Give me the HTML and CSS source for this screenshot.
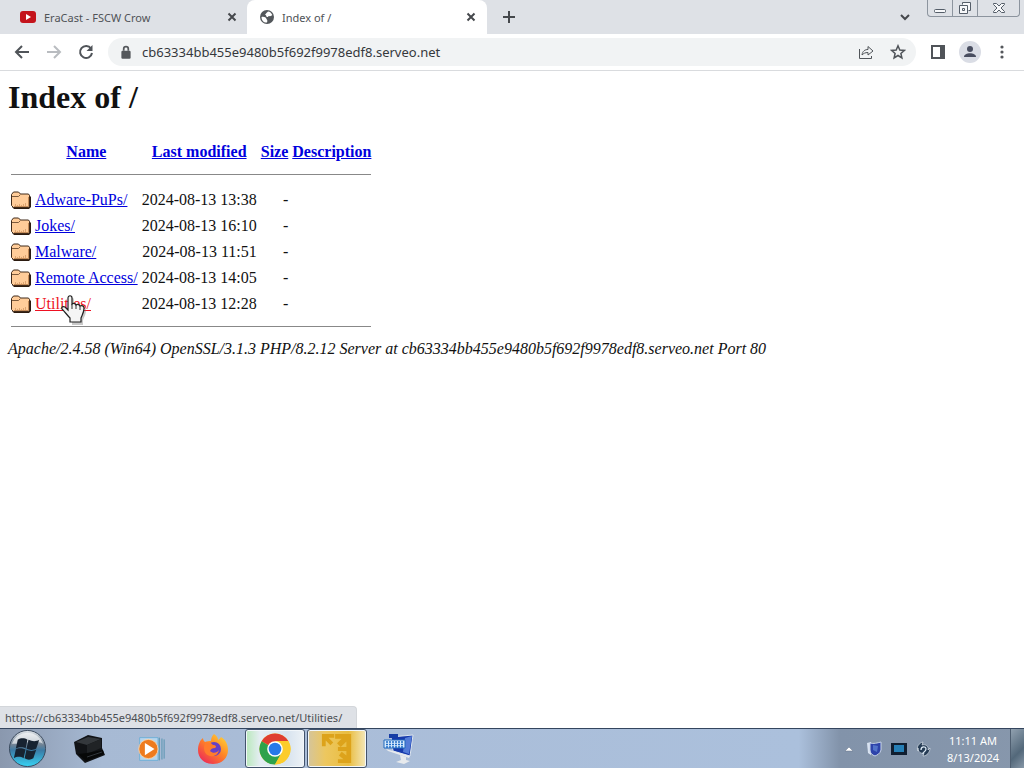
FILE: index.html
```html
<!DOCTYPE html>
<html lang="en">
<head>
<meta charset="utf-8">
<title>Index of /</title>
<link rel="stylesheet" href="styles.css">
</head>
<body>
<header class="browser">
  <div class="tabstrip">
    <div class="tab">
      <svg class="favicon" viewBox="0 0 16 16"><rect y="2" width="16" height="12" rx="3" fill="#c4141c"/><path d="M6 5l5 3-5 3z" fill="#fff"/></svg>
      <span class="tab-title">EraCast - FSCW Crow</span>
      <button class="tab-close" aria-label="Close tab"><svg viewBox="0 0 10 10"><path d="M1.500 1.500l7 7M8.500 1.500l-7 7"/></svg></button>
    </div>
    <div class="tab active">
      <svg class="favicon" viewBox="0 0 16 16"><circle cx="8" cy="8" r="7" fill="#53575b"/><path d="M2.500 8c2-.5 4.500 0 5 2 .3 1 1.500 1 .5 3.500C5 14 2.500 11.500 2.500 8zM9 2.600c2 .2 3.500 1.600 4.300 3.400-1 .8-1.800 1.500-3 1-1.300-.5-.8 1.500-2.300 1-1.200-.4-.5-2-1.500-2C5.500 6 7 4.500 9 2.600z" fill="#fff"/></svg>
      <span class="tab-title">Index of /</span>
      <button class="tab-close" aria-label="Close tab"><svg viewBox="0 0 10 10"><path d="M1.500 1.500l7 7M8.500 1.500l-7 7"/></svg></button>
    </div>
    <button class="new-tab" aria-label="New tab"><svg viewBox="0 0 14 14"><path d="M7 1v12M1 7h12"/></svg></button>
    <button class="tab-search" aria-label="Search tabs"><svg viewBox="0 0 12 12"><path d="M2 4l4 4 4-4"/></svg></button>
    <div class="window-controls">
      <button aria-label="Minimize"><svg viewBox="0 0 16 16"><rect x="2.500" y="9.500" width="11" height="3" rx="1"/></svg></button>
      <button aria-label="Restore"><svg viewBox="0 0 16 16"><path d="M5.500 4.500v-2h8v8h-2M2.500 5.500h8v8h-8zM5.500 8.500h2v2h-2z"/></svg></button>
      <button class="close" aria-label="Close"><svg viewBox="0 0 16 16"><path d="M2.500 3.500h3L8 6l2.500-2.500h3v1L10 8l3.500 3.500v1h-3L8 10l-2.500 2.500h-3v-1L6 8 2.500 4.500z"/></svg></button>
    </div>
  </div>
  <div class="toolbar">
    <button class="tool" aria-label="Back"><svg viewBox="0 0 16 16"><path d="M15 8H2M8 2L2 8l6 6"/></svg></button>
    <button class="tool faded" aria-label="Forward"><svg viewBox="0 0 16 16"><path d="M1 8h13M8 2l6 6-6 6"/></svg></button>
    <button class="tool" aria-label="Reload"><svg viewBox="0 0 16 16"><path d="M13 4.500A6 6 0 1 0 14 9"/><path d="M14.500 1v6h-6z" class="solid"/></svg></button>
    <div class="omnibox">
      <svg class="lock" viewBox="0 0 10 13"><rect x="1" y="5" width="8" height="7" rx="1" fill="#54575b"/><path d="M3 5V3.500a2 2 0 0 1 4 0V5" fill="none" stroke="#54575b" stroke-width="1.500"/></svg>
      <input class="address" type="text" aria-label="Address" value="cb63334bb455e9480b5f692f9978edf8.serveo.net">
      <button class="tool thin" aria-label="Share"><svg viewBox="0 0 16 16"><path d="M1.500 5v9.500h12V12M4 11c.5-4 3-5.500 6-5.500V2.500L15 7l-5 4V8.500C7 8.500 5.500 9.500 4 11z"/></svg></button>
      <button class="tool thin" aria-label="Bookmark this tab"><svg viewBox="0 0 16 16"><path d="M8 1.800l1.800 4.200 4.500.4-3.400 3 1 4.500L8 11.500l-3.900 2.400 1-4.500-3.400-3 4.500-.4z"/></svg></button>
    </div>
    <button class="tool panel" aria-label="Side panel"><svg viewBox="0 0 16 16"><path d="M2 2h12v12H2z"/><path d="M10 2h4v12h-4z" class="solid"/></svg></button>
    <button class="tool avatar" aria-label="Profile"><svg viewBox="0 0 22 22"><circle cx="11" cy="11" r="11" fill="#dadde5" stroke="none"/><circle cx="11" cy="8" r="3" fill="#494e60" stroke="none"/><path d="M5 16c0-5 12-5 12 0z" fill="#494e60" stroke="none"/></svg></button>
    <button class="tool" aria-label="Menu"><svg viewBox="0 0 16 16"><g fill="#54575b" stroke="none"><circle cx="8" cy="3" r="1.600"/><circle cx="8" cy="8" r="1.600"/><circle cx="8" cy="13" r="1.600"/></g></svg></button>
  </div>
</header>

<main class="page">
  <svg class="symbols" aria-hidden="true">
    <defs>
      <symbol id="folder" viewBox="0 0 20 22">
        <path d="M1 7l2-2h5l2 2h8l2 2v10l-2 2H3l-2-2z" fill="#2b1b10"/>
        <path d="M.5 6.500L2.500 4h5l2 2h8l1 1.500V18l-1 1.500h-15l-2-2z" fill="#ffcc99" stroke="#402a1a"/>
        <path d="M1 8.500h6.500L9.500 6.500" fill="none" stroke="#7c5a3c"/>
        <path d="M3 18.500h14M17.500 9v9" fill="none" stroke="#c58c59"/>
        <path d="M4.500 16v2M6.500 17v1M8.500 16v2M10.500 17v1M12.500 16v2M14.500 15v3" fill="none" stroke="#dda470"/>
      </symbol>
    </defs>
  </svg>
  <h1>Index of /</h1>
  <table class="listing">
    <thead>
      <tr><th class="icon"></th><th><a href="#name">Name</a></th><th><a href="#modified">Last modified</a></th><th><a href="#size">Size</a></th><th><a href="#description">Description</a></th></tr>
      <tr class="rule"><th colspan="5"><hr></th></tr>
    </thead>
    <tbody>
      <tr><td class="icon"><svg class="folder"><use href="#folder"/></svg></td><td><a href="#adware">Adware-PuPs/</a></td><td class="num">2024-08-13 13:38</td><td class="num">-</td><td></td></tr>
      <tr><td class="icon"><svg class="folder"><use href="#folder"/></svg></td><td><a href="#jokes">Jokes/</a></td><td class="num">2024-08-13 16:10</td><td class="num">-</td><td></td></tr>
      <tr><td class="icon"><svg class="folder"><use href="#folder"/></svg></td><td><a href="#malware">Malware/</a></td><td class="num">2024-08-13 11:51</td><td class="num">-</td><td></td></tr>
      <tr><td class="icon"><svg class="folder"><use href="#folder"/></svg></td><td><a href="#remote">Remote Access/</a></td><td class="num">2024-08-13 14:05</td><td class="num">-</td><td></td></tr>
      <tr><td class="icon"><svg class="folder"><use href="#folder"/></svg></td><td><span class="pointed"><a class="pressed" href="#utilities">Utilities/</a><svg class="cursor" viewBox="0 0 28 30"><path d="M8 3c0-3 4-3 4 0v6c1-1 3-1 4 1 1-1 3-1 4 1 2-1 4 0 4 2 0 5-2 7-3 10v5H10v-4C7 20 5 17 2 14c-1-2 1-3 3-2l3 3z" fill="#777" opacity=".4" transform="translate(2 2)"/><path d="M8 3c0-3 4-3 4 0v6c1-1 3-1 4 1 1-1 3-1 4 1 2-1 4 0 4 2 0 5-2 7-3 10v4H10v-4C7 20 5 17 2 14c-1-2 1-3 3-2l3 3z" fill="#f5f5f5" stroke="#222" stroke-width="1.200"/><path d="M12 9v5M16 10v4M20 11v4" stroke="#333"/></svg></span></td><td class="num">2024-08-13 12:28</td><td class="num">-</td><td></td></tr>
    </tbody>
    <tfoot>
      <tr class="rule"><th colspan="5"><hr></th></tr>
    </tfoot>
  </table>
  <address>Apache/2.4.58 (Win64) OpenSSL/3.1.3 PHP/8.2.12 Server at cb63334bb455e9480b5f692f9978edf8.serveo.net Port 80</address>
  <div class="status">https://cb63334bb455e9480b5f692f9978edf8.serveo.net/Utilities/</div>
</main>

<footer class="taskbar">
  <button class="start" aria-label="Start"><svg viewBox="0 0 40 40">
    <defs><linearGradient id="orb" x2="0" y2="1"><stop stop-color="#e4e8ec"/><stop offset=".4" stop-color="#6f8294"/><stop offset=".55" stop-color="#3b7ba5"/><stop offset="1" stop-color="#36d3f5"/></linearGradient></defs>
    <circle cx="20" cy="20" r="18.500" fill="url(#orb)" stroke="#39485c"/><path d="M4 15a17 17 0 0 1 32 0c-9-5-20 1-32 0z" fill="#fff" opacity=".6"/>
    <path d="M10 11c3-2 7-2 10 0l-2 9c-3-2-7-1-10 0zM21 11c4 2 8 2 11 0l-3 9c-3 2-7 2-10 0zM8 21c3-2 7-1 10 0l-2 9c-3-2-7-2-10 0zM19 21c3 2 7 2 10 0l-3 9c-3 2-6 2-9 0z" fill="#172331"/></svg></button>
  <button class="task" aria-label="Computer"><svg viewBox="0 0 32 32"><path d="M1 9l14-7 14 3v10l3 7-20 8-9-9z" fill="#111316"/><path d="M3 9l12-5 13 2-14 6z" fill="#34383c"/><path d="M14 12l14-6v9l-14 6z" fill="#202326"/><path d="M5 21l9-1 16-3 1 4-18 7z" fill="#070808"/><path d="M14 24l15-5" stroke="#30353a"/></svg></button>
  <button class="task media" aria-label="Media player"><svg viewBox="0 0 32 32"><path d="M3 3h21v26H3z" fill="#b5d5ed" stroke="#6daed6"/><path d="M25.500 3v26M28.500 4v24M31 5v22" stroke="#4d8fac"/><circle cx="13" cy="16" r="11" fill="#ee7b1e" stroke="#fbd3a7"/><path d="M9 9l11 7-11 7z" fill="#fff"/></svg></button>
  <button class="task" aria-label="Firefox"><svg viewBox="0 0 32 32">
    <defs><linearGradient id="fire" x1="1" x2=".2" y2="1"><stop stop-color="#ffe03b"/><stop offset=".5" stop-color="#ff8625"/><stop offset="1" stop-color="#ed2958"/></linearGradient></defs>
    <path d="M17 1c3 2 4 4 4 6 2-1 3-3 3-3 5 3 7 8 7 13 0 8-6 14-15 14S1 25 1 17C1 12 3 7 6 5c0 2 1 3 2 4 2-1 4-1 6-1 0-3 1-5 3-7z" fill="url(#fire)"/><circle cx="17" cy="16" r="7" fill="#6641c7"/><path d="M8 10c3-1 6-1 8 2 3 0 4 2 2 3-3 0-4 1-5 3 3 3 7 2 9-1-1 5-5 7-9 6-6-1-7-8-5-13z" fill="#ff7c2c"/></svg></button>
  <button class="task open current" aria-label="Chrome"><svg viewBox="0 0 32 32"><circle cx="16" cy="16" r="15.500" fill="#ffcf2f"/><path d="M16 16L2.600 8.200A15.500 15.500 0 0 1 29.400 8.200z" fill="#df3d31"/><path d="M2.600 8.200A15.500 15.500 0 0 0 16 31.500L22.500 20z" fill="#2da24c"/><path d="M16 8h13.300a15.500 15.500 0 0 1-13.300 23.500L22.500 20z" fill="#fccc2c"/><circle cx="16" cy="16" r="7.800" fill="#fff"/><circle cx="16" cy="16" r="6.300" fill="#2679e8"/></svg></button>
  <button class="task open gold" aria-label="VMware"><svg viewBox="0 0 34 34"><path d="M1 1h13v4H8l5 5-3 3-5-5v6H1z" fill="#dda31b"/><path d="M15 1h17v14h-5V9l-6 6-4-4 5-5h-7z" fill="#dda31b"/><path d="M18 15h14v17H18v-4h6l-5-4 3-4 5 4v-5h-9z" fill="#dda31b"/></svg></button>
  <button class="task" aria-label="On-screen keyboard"><svg viewBox="0 0 32 32"><path d="M8 4l22-2-3 21-17-5z" fill="#173aab" stroke="#dce5ef"/><path d="M22 5l7-2-3 18-6-2z" fill="#537bd7"/><path d="M6 1h9v4H6z" fill="#173da5"/><path d="M1 7h21v8H1z" fill="#d5eafd" stroke="#2069bc"/><path d="M3 9h17M3 11.500h17M3 14h17" stroke="#206dc6" stroke-width="1.500" stroke-dasharray="2 1"/><path d="M3 16l24 7-1 2L5 18z" fill="#e7eaed"/><path d="M17 22l6 2v3l4 1-6 3-8-2 5-2z" fill="#e7eaed"/></svg></button>
  <div class="tray">
    <button class="tray-icon" aria-label="Show hidden icons"><svg viewBox="0 0 16 16"><path d="M4 10l4-4 4 4z" fill="#fff" stroke="#65758a" stroke-width=".5"/></svg></button>
    <button class="tray-icon" aria-label="Security"><svg viewBox="0 0 16 16"><path d="M1 2l4-1v13l-3-2z" fill="#d9e3f1"/><path d="M4 2c4 1 7 0 11-1v8c-1 4-4 5-6 6-3-1-5-3-5-6z" fill="#2e43aa" stroke="#c8d4e8"/><path d="M7 4l5 1-1 6-4-2z" fill="#5273c9"/></svg></button>
    <button class="tray-icon" aria-label="Display"><svg viewBox="0 0 16 16"><path d="M0 2h16v12H0z" fill="#101e30"/><path d="M3 4h10v7H3z" fill="#267fb6"/></svg></button>
    <button class="tray-icon" aria-label="Volume"><svg viewBox="0 0 16 16"><path d="M2 10c-2-4 1-8 5-9l-1 3c3-1 7 1 6 5l2-2c0 4-3 8-7 8l1-3c-3 1-6-1-6-5z" fill="#263c55" stroke="#e6edf4" stroke-width=".6"/><path d="M5 9c0-4 5-4 5-1s-4 3-3 5" fill="none" stroke="#dbe8f4" stroke-width="1.300"/></svg></button>
    <div class="clock"><span>11:11 AM</span><span>8/13/2024</span></div>
    <button class="show-desktop" aria-label="Show desktop"></button>
  </div>
</footer>
</body>
</html>
```
FILE: styles.css
```css
* { box-sizing: border-box; }

body {
  margin: 0;
  min-height: 100vh;
  display: flex;
  flex-direction: column;
  background: #fff;
  color: #111;
  font-family: "Liberation Serif", "Times New Roman", serif;
  font-size: 16px;
}

button {
  padding: 0;
  border: 0;
  background: none;
  display: flex;
  align-items: center;
  justify-content: center;
  flex: none;
}

svg { display: block; flex: none; }

/* Browser frame */
.browser {
  font-family: "Noto Sans", "Open Sans", sans-serif;
  font-size: 12px;
  border-bottom: 1px solid #d9dbde;
}

.tabstrip {
  display: flex;
  height: 34px;
  background: #dee1e6;
}

.tab {
  display: flex;
  align-items: center;
  gap: 7px;
  flex: 0 1 240px;
  padding: 0 11px 0 12px;
  color: #505357;
  font-size: 11px;
}

.tab:first-child { flex-basis: 247px; padding: 0 10px 0 20px; gap: 8px; }

.tab.active {
  background: #fff;
  border-radius: 8px 8px 0 0;
}

.tab-title { flex: 1; white-space: nowrap; }
.favicon { width: 16px; height: 16px; }
.tab-close svg { width: 10px; height: 10px; }
.tab-close, .new-tab, .tab-search { stroke: #45484c; stroke-width: 2; fill: none; }
.new-tab { width: 44px; }
.new-tab svg { width: 14px; height: 14px; }
.tab-search { margin-left: auto; width: 44px; }
.tab-search svg { width: 12px; height: 12px; }

.window-controls {
  display: flex;
  height: 17px;
  margin-right: 4px;
  border: 1px solid #8c949e;
  border-top: 0;
  border-radius: 0 0 4px 4px;
  fill: #f7f8fa;
  stroke: #555e69;
}

.window-controls button { width: 25px; border-right: 1px solid #8c949e; }
.window-controls .close { width: 41px; border-right: 0; }
.window-controls svg { width: 16px; height: 16px; }

.toolbar {
  display: flex;
  align-items: center;
  gap: 4px;
  height: 36px;
  padding: 0 8px;
}

.tool { width: 28px; height: 28px; stroke: #505459; stroke-width: 2; fill: none; }
.tool svg { width: 16px; height: 16px; }
.tool .solid { fill: #505459; stroke: none; }
.faded { stroke: #b9bcc0; }
.thin { stroke-width: 1; }
.thin + .thin { stroke-width: 1.5; }
.avatar svg { width: 22px; height: 22px; }

.omnibox {
  flex: 1;
  display: flex;
  align-items: center;
  gap: 4px;
  height: 28px;
  margin: 0 4px;
  padding: 0 4px 0 12px;
  border-radius: 14px;
  background: #f1f3f4;
}

.lock { width: 12px; height: 15px; }

.address {
  flex: 1;
  min-width: 0;
  padding: 0 0 0 6px;
  border: 0;
  background: none;
  color: #35383c;
  font: inherit;
  font-size: 13px;
}

/* Directory listing */
.page {
  flex: 1;
  position: relative;
  padding: 8px;
}

.symbols { position: absolute; width: 0; height: 0; }

h1 { margin: 0 0 21px; font-size: 32px; line-height: 37px; }
.listing { border-spacing: 2px; line-height: 19px; }
.listing th, .listing td { height: 24px; padding: 1px; }
.listing .rule th { height: 20px; vertical-align: top; }
.listing .icon { width: 22px; }
.listing a { color: #0000dd; }
.listing .pressed { color: #ee1122; }
.listing .num { text-align: right; }
.folder { width: 20px; height: 22px; }
hr { height: 1px; margin: 8px 0; border: 0; background: #888; }
address { line-height: 19px; }

.pointed { position: relative; }
.cursor { position: absolute; left: 25px; top: 0; width: 28px; height: 30px; }

.status {
  position: absolute;
  left: 0;
  bottom: 0;
  padding: 3px 14px 2px 5px;
  border: 1px solid #d3d6da;
  border-left: 0;
  border-bottom: 0;
  border-radius: 0 4px 0 0;
  background: #dee1e6;
  color: #4b4e52;
  font: 11px/16px "Noto Sans", "Open Sans", sans-serif;
}

/* Taskbar */
.taskbar {
  display: flex;
  height: 40px;
  border-top: 1px solid #34455e;
  background: linear-gradient(90deg, #8a98ae, #a7bad4 10%, #aabdd8 30%, #abc0dc 78%, #8293aa 82%, #8797ac);
}

.start { width: 54px; margin-right: 5px; }
.start svg { width: 39px; height: 39px; }
.task { width: 60px; margin-right: 2px; }
.task svg { width: 32px; height: 32px; }
.media svg { width: 28px; height: 28px; }

.open {
  border: 1px solid #42536c;
  border-radius: 3px;
  box-shadow: inset 0 0 0 1px #f2f7fb;
}

.current { background: linear-gradient(90deg, #b9e9bb, #e5edf3 24%, #d7e3ef 70%, #edf2f6); }
.gold { background: linear-gradient(90deg, #d5c59b, #edc75f 30%, #e9bd41 70%, #f3e8bc); }

.tray { display: flex; align-items: center; margin-left: auto; color: #fff; }
.tray-icon { width: 25px; height: 38px; }
.tray-icon svg { width: 16px; height: 16px; }

.clock {
  display: flex;
  flex-direction: column;
  align-items: center;
  width: 74px;
  font: 11px/17px "Noto Sans", "Open Sans", sans-serif;
}

.show-desktop {
  width: 14px;
  height: 39px;
  border-left: 1px solid #4e5e70;
  background: linear-gradient(135deg, #91a1b0, #53687a 60%, #8797a7);
}
```
